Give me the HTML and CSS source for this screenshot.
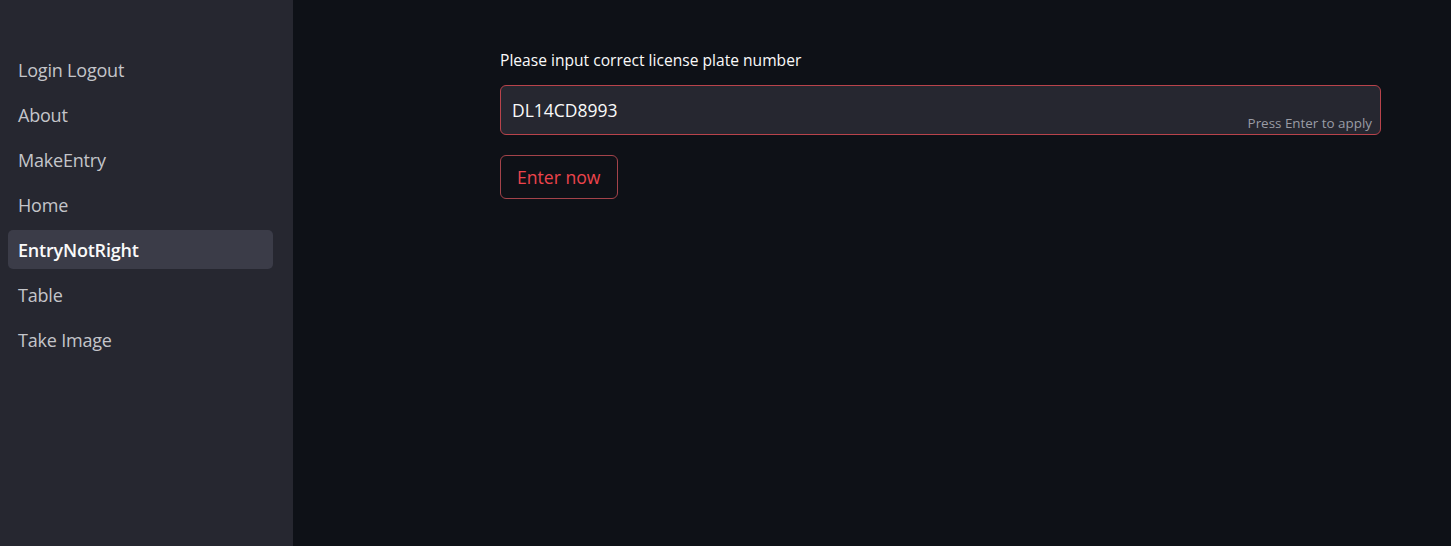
FILE: index.html
```html
<!DOCTYPE html>
<html>
<head>
<meta charset="utf-8">
<link rel="stylesheet" href="styles.css">
</head>
<body>
<div class="app">
  <aside class="sidebar">
    <nav class="nav">
      <a class="nav-item">Login Logout</a>
      <a class="nav-item">About</a>
      <a class="nav-item">MakeEntry</a>
      <a class="nav-item">Home</a>
      <a class="nav-item active">EntryNotRight</a>
      <a class="nav-item">Table</a>
      <a class="nav-item">Take Image</a>
    </nav>
  </aside>
  <main class="main">
    <div class="content">
      <label class="label">Please input correct license plate number</label>
      <div class="input-box">
        <span class="input-value">DL14CD8993</span>
        <span class="hint">Press Enter to apply</span>
      </div>
      <button class="btn">Enter now</button>
    </div>
  </main>
</div>
</body>
</html>
```
FILE: styles.css
```css
html, body {
  margin: 0;
  padding: 0;
  height: 100%;
}
body {
  background: #0e1117;
  font-family: "Open Sans", "Noto Sans", sans-serif;
  color: #fafafa;
}
.app {
  display: flex;
  height: 546px;
}
.sidebar {
  width: 293px;
  flex: none;
  background: #262730;
  padding-top: 50px;
  box-sizing: border-box;
}
.nav {
  display: flex;
  flex-direction: column;
  gap: 6px;
  padding: 0 20px 0 8px;
}
.nav-item {
  display: block;
  height: 39px;
  line-height: 41px;
  padding-left: 10px;
  border-radius: 5px;
  font-size: 18px;
  letter-spacing: -0.2px;
  color: #c4c5ca;
}
.nav-item.active {
  background: #3b3c48;
  color: #fafafa;
  font-weight: 600;
}
.main {
  flex: 1;
}
.content {
  margin-left: 207px;
  width: 881px;
  padding-top: 49px;
  display: flex;
  flex-direction: column;
  align-items: flex-start;
}
.label {
  font-size: 15.6px;
  line-height: 22px;
  color: #fafafa;
  margin-bottom: 14px;
}
.input-box {
  position: relative;
  width: 100%;
  height: 50px;
  box-sizing: border-box;
  border: 1px solid #b8434b;
  border-radius: 6px;
  background: #262730;
  display: flex;
  align-items: center;
  padding-left: 11px;
}
.input-value {
  font-size: 17.5px;
  color: #fafafa;
  margin-top: -1px;
}
.hint {
  position: absolute;
  right: 8px;
  bottom: 2px;
  font-size: 13.4px;
  color: #9a9ca5;
}
.btn {
  margin-top: 20px;
  height: 44px;
  padding: 0 16px;
  background: #0e1117;
  border: 1px solid #a3434a;
  border-radius: 6px;
  color: #ec444c;
  font-family: "Open Sans", "Noto Sans", sans-serif;
  font-size: 17.6px;
}
```
